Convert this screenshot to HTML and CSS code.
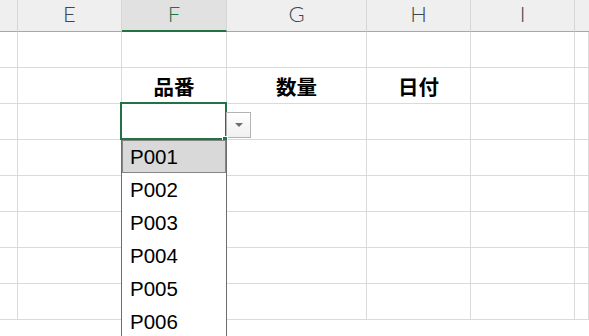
FILE: index.html
```html
<!DOCTYPE html>
<html>
<head>
<meta charset="utf-8">
<link rel="stylesheet" href="styles.css">
</head>
<body>
<div class="sheet">
  <div class="hd"></div>
  <div class="hd">E</div>
  <div class="hd hd-sel">F</div>
  <div class="hd">G</div>
  <div class="hd">H</div>
  <div class="hd">I</div>
  <div class="hd hd-last"></div>

  <div class="c"></div><div class="c"></div><div class="c"></div><div class="c"></div><div class="c"></div><div class="c"></div><div class="c"></div>

  <div class="c"></div><div class="c"></div><div class="c title">品番</div><div class="c title">数量</div><div class="c title">日付</div><div class="c"></div><div class="c"></div>

  <div class="c"></div><div class="c"></div>
  <div class="c active">
    <div class="sel"></div>
    <div class="handle"></div>
    <div class="ddbtn"><span class="arrow"></span></div>
    <ul class="list">
      <li class="item on">P001</li>
      <li class="item">P002</li>
      <li class="item">P003</li>
      <li class="item">P004</li>
      <li class="item">P005</li>
      <li class="item">P006</li>
    </ul>
  </div>
  <div class="c"></div><div class="c"></div><div class="c"></div><div class="c"></div>

  <div class="c"></div><div class="c"></div><div class="c"></div><div class="c"></div><div class="c"></div><div class="c"></div><div class="c"></div>
  <div class="c"></div><div class="c"></div><div class="c"></div><div class="c"></div><div class="c"></div><div class="c"></div><div class="c"></div>
  <div class="c"></div><div class="c"></div><div class="c"></div><div class="c"></div><div class="c"></div><div class="c"></div><div class="c"></div>
  <div class="c"></div><div class="c"></div><div class="c"></div><div class="c"></div><div class="c"></div><div class="c"></div><div class="c"></div>
  <div class="c"></div><div class="c"></div><div class="c"></div><div class="c"></div><div class="c"></div><div class="c"></div><div class="c"></div>
</div>
</body>
</html>
```

FILE: styles.css
```css
* { box-sizing: border-box; }
html, body { margin: 0; padding: 0; background: #fff; }
body { width: 589px; height: 336px; overflow: hidden; font-family: "Liberation Sans", Arial, sans-serif; }

.sheet {
  display: grid;
  grid-template-columns: 18px 104px 105px 140px 104px 104px 1fr;
  grid-template-rows: 32px repeat(8, 36px);
  width: 589px;
  height: 336px;
  overflow: hidden;
}

.hd {
  background: #efefef;
  border-right: 1px solid #d6d6d6;
  border-bottom: 1px solid #a8a8a8;
  display: flex;
  align-items: center;
  justify-content: center;
  font-family: Lato, "Liberation Sans", sans-serif;
  font-weight: 300;
  font-size: 22px;
  color: #3f4652;
  padding-bottom: 5px;
}
.hd-last { border-right: none; }
.hd-sel {
  background: #e1e1e1;
  color: #217346;
  border-bottom: 2px solid #217346;
  padding-bottom: 4px;
}

.c {
  border-right: 1px solid #dadada;
  border-bottom: 1px solid #dadada;
  display: flex;
  align-items: center;
  justify-content: center;
}
.title {
  font-family: "Noto Sans CJK JP", sans-serif;
  font-weight: 700;
  font-size: 20.5px;
  color: #000;
}

.active { position: relative; }
.sel {
  position: absolute;
  left: -2px;
  top: -2px;
  width: 107px;
  height: 38px;
  border: 2px solid #217346;
  z-index: 2;
}
.handle {
  position: absolute;
  left: 100px;
  top: 32px;
  width: 6px;
  height: 6px;
  background: #217346;
  border: 1px solid #fff;
  z-index: 3;
}
.ddbtn {
  position: absolute;
  left: 104px;
  top: 8px;
  width: 25px;
  height: 26px;
  border: 1px solid #b4b4b4;
  background: linear-gradient(#ffffff, #f0f0f0);
  display: flex;
  align-items: center;
  justify-content: center;
  z-index: 2;
}
.arrow {
  width: 0;
  height: 0;
  border-left: 4px solid transparent;
  border-right: 4px solid transparent;
  border-top: 4px solid #6e6e6e;
}
.list {
  position: absolute;
  left: -1px;
  top: 36px;
  width: 106px;
  margin: 0;
  padding: 0;
  list-style: none;
  background: #fff;
  border-left: 1px solid #6e6e6e;
  border-right: 1px solid #6e6e6e;
  z-index: 4;
}
.item {
  height: 33px;
  line-height: 33px;
  padding-left: 8px;
  font-size: 20.5px;
  color: #000;
}
.item.on {
  background: #d9d9d9;
  border: 1px solid #858585;
  line-height: 31px;
  padding-left: 7px;
}
```
